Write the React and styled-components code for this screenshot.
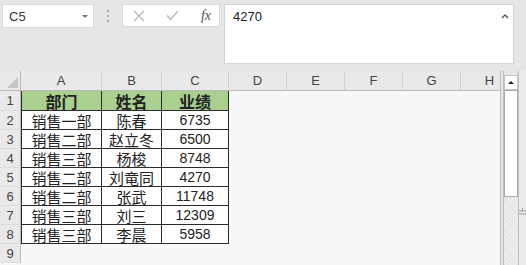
import React from 'react'
import styled, { createGlobalStyle } from 'styled-components'

const GlobalStyle = createGlobalStyle`
  html, body {
    margin: 0;
    padding: 0;
    background: #e6e6e6;
    overflow: hidden;
  }
  body {
    width: 526px;
    height: 265px;
    font-family: "Liberation Sans", Arial, sans-serif;
  }
`

const Window = styled.div`
  width: 526px;
  height: 265px;
  display: flex;
  flex-direction: column;
  background: #e6e6e6;
  overflow: hidden;
`

const FormulaBar = styled.div`
  height: 71px;
  flex: none;
  box-sizing: border-box;
  padding: 4px 0 0 2px;
  display: flex;
  align-items: flex-start;
`

const NameBox = styled.div`
  width: 92px;
  height: 24px;
  box-sizing: border-box;
  background: #fff;
  border: 1px solid #dadada;
  display: flex;
  align-items: center;
  justify-content: space-between;
  padding: 0 5px 0 6px;
  font-size: 13px;
  color: #333;
`

const Caret = styled.span`
  width: 0;
  height: 0;
  border-left: 3px solid transparent;
  border-right: 3px solid transparent;
  border-top: 3px solid #777;
`

const Grip = styled.div`
  width: 28px;
  height: 24px;
  display: flex;
  flex-direction: column;
  align-items: center;
  justify-content: center;
  gap: 3px;
  span {
    width: 2px;
    height: 2px;
    background: #aaa;
  }
`

const ButtonBox = styled.div`
  width: 98px;
  height: 23px;
  box-sizing: border-box;
  background: #fff;
  border: 1px solid #dadada;
  display: flex;
  align-items: center;
  padding: 0 8px 0 10px;
  justify-content: space-between;
  margin-right: 4px;
`

const Fx = styled.span`
  font-family: "Liberation Serif", serif;
  font-style: italic;
  font-size: 14px;
  color: #555;
`

const FormulaInput = styled.div`
  width: 290px;
  height: 60px;
  box-sizing: border-box;
  background: #fff;
  border: 1px solid #d3d3d3;
  display: flex;
  justify-content: space-between;
  padding: 4px 4px 0 8px;
  font-size: 13px;
  color: #222;
`

const Sheet = styled.div`
  flex: 1;
  display: flex;
  min-height: 0;
`

const Grid = styled.div`
  width: 500px;
  flex: none;
  overflow: hidden;
  display: grid;
  grid-template-columns: 21px 81px 60px 67px repeat(5, 58px);
  grid-template-rows: 20px 20px repeat(8, 19px);
  background: #f8f8f8;
  border-right: 1px solid #bdbdbd;
`

const ColHead = styled.div`
  background: #e9e9e9;
  border-right: 1px solid #d2d2d2;
  border-bottom: 1px solid #b9b9b9;
  box-sizing: border-box;
  display: flex;
  align-items: center;
  justify-content: center;
  font-size: 13px;
  color: #444;
  position: relative;
`

const Corner = styled(ColHead)`
  border-right: 1px solid #b9b9b9;
  &::after {
    content: '';
    position: absolute;
    right: 2px;
    bottom: 2px;
    width: 0;
    height: 0;
    border-left: 11px solid transparent;
    border-bottom: 11px solid #c4c4c4;
  }
`

const RowHead = styled.div`
  background: #e9e9e9;
  border-right: 1px solid #b9b9b9;
  border-bottom: 1px solid #dcdcdc;
  box-sizing: border-box;
  display: flex;
  align-items: center;
  justify-content: center;
  font-size: 13px;
  color: #444;
`

const Cell = styled.div`
  box-sizing: border-box;
  display: flex;
  align-items: center;
  justify-content: center;
  white-space: nowrap;
  line-height: 1;
  background: ${p => (p.$head ? '#a9d08e' : p.$table ? '#fff' : 'transparent')};
  font-family: ${p => (p.$num ? '"Liberation Sans", Arial' : '"Noto Sans CJK SC"')}, sans-serif;
  font-size: ${p => (p.$head ? '16px' : p.$num ? '14px' : '15px')};
  font-weight: ${p => (p.$head ? 700 : 400)};
  color: #222;
  border-right: ${p => (p.$table ? '1px solid #2a2a2a' : 'none')};
  border-bottom: ${p => (p.$table ? '1px solid #2a2a2a' : 'none')};
  border-left: ${p => (p.$first ? '1px solid #2a2a2a' : 'none')};
`

const ScrollColumn = styled.div`
  width: 16px;
  flex: none;
  margin-left: 2px;
  display: flex;
  flex-direction: column;
  padding-top: 4px;
  border-left: 1px solid #bdbdbd;
  border-right: 1px solid #bdbdbd;
  box-sizing: border-box;
`

const ArrowButton = styled.div`
  height: 15px;
  background: #fff;
  border: 1px solid #c3c3c3;
  box-sizing: border-box;
  display: flex;
  align-items: center;
  justify-content: center;
  span {
    width: 0;
    height: 0;
    border-left: 3px solid transparent;
    border-right: 3px solid transparent;
    border-bottom: 3px solid #222;
  }
`

const Thumb = styled.div`
  height: 107px;
  background: #fff;
  border: 1px solid #a9a9a9;
  box-sizing: border-box;
`

const Track = styled.div`
  flex: 1;
  background: repeating-linear-gradient(45deg, #e4e4e4 0 1px, #ededed 1px 3px);
`

const SideStrip = styled.div`
  flex: 1;
  display: flex;
  flex-direction: column;
  align-items: flex-end;
  padding-top: 137px;
  background: #ececec;
`

const headers = ['A', 'B', 'C', 'D', 'E', 'F', 'G', 'H']

const rows = [
  ['部门', '姓名', '业绩'],
  ['销售一部', '陈春', '6735'],
  ['销售二部', '赵立冬', '6500'],
  ['销售三部', '杨梭', '8748'],
  ['销售二部', '刘竜同', '4270'],
  ['销售二部', '张武', '11748'],
  ['销售三部', '刘三', '12309'],
  ['销售三部', '李晨', '5958'],
  ['', '', ''],
]

const App = () => (
  <Window>
    <GlobalStyle />
    <FormulaBar>
      <NameBox>
        C5
        <Caret />
      </NameBox>
      <Grip>
        <span />
        <span />
        <span />
      </Grip>
      <ButtonBox>
        <svg width="12" height="12" viewBox="0 0 12 12">
          <path d="M1 1L11 11M11 1L1 11" stroke="#b5b5b5" strokeWidth="1.2" fill="none" />
        </svg>
        <svg width="13" height="11" viewBox="0 0 13 11">
          <path d="M1 5.5L4.5 9.5L12 1" stroke="#b5b5b5" strokeWidth="1.3" fill="none" />
        </svg>
        <Fx>fx</Fx>
      </ButtonBox>
      <FormulaInput>
        4270
        <svg width="8" height="6" viewBox="0 0 8 6" style={{ marginTop: 4 }}>
          <path d="M1 5L4 2L7 5" stroke="#555" strokeWidth="1.4" fill="none" />
        </svg>
      </FormulaInput>
    </FormulaBar>
    <Sheet>
      <Grid>
        <Corner />
        {headers.map(h => (
          <ColHead key={h}>{h}</ColHead>
        ))}
        {rows.map((row, i) => (
          <React.Fragment key={i}>
            <RowHead>{i + 1}</RowHead>
            {row.map((v, j) => {
              const inTable = i < 8
              return (
                <Cell
                  key={j}
                  $table={inTable}
                  $head={i === 0}
                  $first={inTable && j === 0}
                  $num={j === 2 && i > 0}
                >
                  {v}
                </Cell>
              )
            })}
            {headers.slice(3).map(h => (
              <Cell key={h} />
            ))}
          </React.Fragment>
        ))}
      </Grid>
      <ScrollColumn>
        <ArrowButton>
          <span />
        </ArrowButton>
        <Thumb />
        <Track />
      </ScrollColumn>
      <SideStrip>
        <svg width="7" height="9" viewBox="0 0 7 9">
          <path d="M0 3H7M0 6H7M3.5 0V3" stroke="#999" strokeWidth="1" fill="none" />
        </svg>
      </SideStrip>
    </Sheet>
  </Window>
)

export default App
